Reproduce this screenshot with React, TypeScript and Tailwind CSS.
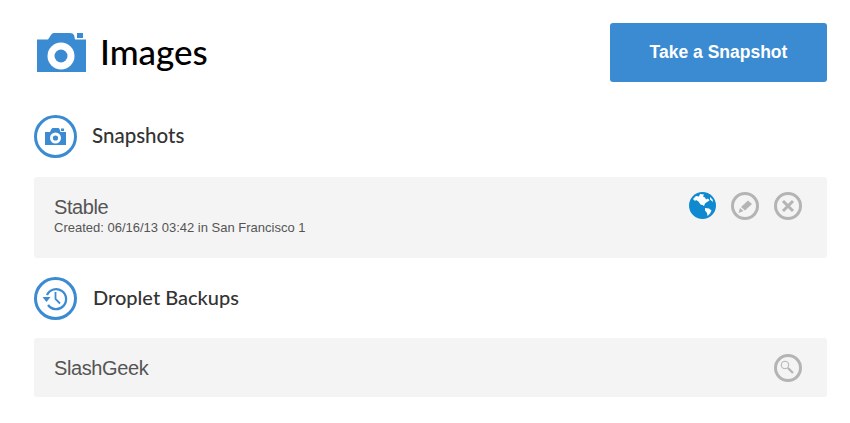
import React from "react";

const CameraBig = () => (
  <svg width="49" height="39" viewBox="0 0 49 39" className="block">
    <path fill="#3a8bd2" d="M0 6.500h11l3-4.500q1-2 3-2h16q3 0 4 2l1 4.500h11v32.500H0z" />
    <rect x="40" y="0" width="6" height="5" fill="#3a8bd2" />
    <circle cx="24" cy="23" r="13.500" fill="#fff" />
    <circle cx="24" cy="23" r="6.500" fill="#3a8bd2" />
  </svg>
);

const CircleIcon = ({ children }: { children: React.ReactNode }) => (
  <div className="w-[43px] h-[43px] shrink-0 rounded-full border-[3px] border-[#3a8bd2] flex items-center justify-center">
    {children}
  </div>
);

const CameraSmall = () => (
  <svg width="21" height="17" viewBox="0 0 21 17">
    <path fill="#3a8bd2" d="M0 4h5l1.500-3q.5-1 1.500-1h5q1 0 1.500 1l1 3H21v13H0z" />
    <rect x="16" y="0.500" width="3" height="2.500" fill="#3a8bd2" />
    <circle cx="10.500" cy="10" r="5.500" fill="#fff" />
    <circle cx="10.500" cy="10" r="2.600" fill="#3a8bd2" />
  </svg>
);

const HistoryIcon = () => (
  <svg width="27" height="27" viewBox="0 0 27 27" fill="none" stroke="#3a8bd2" strokeWidth="2.300">
    <path d="M5 10A10 10 0 1 1 6 20" />
    <path d="M0.500 12h8L4.500 17z" fill="#3a8bd2" stroke="none" />
    <path d="M13.500 7v7l4.500 4.500" strokeWidth="1.800" />
  </svg>
);

const GlobeIcon = () => (
  <svg width="27" height="27" viewBox="0 0 27 27">
    <circle cx="13.500" cy="13.500" r="13.500" fill="#0f8ad0" />
    <path
      fill="#fff"
      d="M4 7l3-3 3 .5 1-2.500 4 .5-1 2 2 1 1 2 2-1 1.500 2-2.500 1.500-2 1.500-1 2.500-1.500-1-2-.5-2-3-2.500-1.500-1 1z"
    />
    <path fill="#fff" d="M16 16l4 .5 2.500 2-1.500 3-2.500 2.500-.5-3-2-2.500z" />
    <path fill="#fff" d="M21 5l2.500 2.500.5 2.500-3-2.500z" />
  </svg>
);

const ActionCircle = ({ children }: { children: React.ReactNode }) => (
  <div className="w-[28px] h-[28px] rounded-full border-[3px] border-[#b4b4b4] flex items-center justify-center">
    {children}
  </div>
);

const PencilIcon = () => (
  <svg width="16" height="15" viewBox="0 0 16 15">
    <path fill="#b4b4b4" d="M4 8l7-6.500 4 3.500-7 6.500z" />
    <path fill="#b4b4b4" d="M1.500 14l1.500-5 3.500 3z" />
  </svg>
);

const CloseIcon = () => (
  <svg width="14" height="14" viewBox="0 0 14 14" stroke="#b4b4b4" strokeWidth="3">
    <path d="M2 2l10 10M12 2L2 12" />
  </svg>
);

const SearchIcon = () => (
  <svg width="18" height="18" viewBox="0 0 18 18" fill="none" stroke="#b4b4b4">
    <circle cx="6" cy="6" r="3.800" strokeWidth="1" />
    <path d="M9 9l5 5" strokeWidth="2.200" />
  </svg>
);

export default function App() {
  return (
    <div className="w-[850px] h-[423px] bg-white px-[34px] pt-[23px] font-['Lato',sans-serif] overflow-hidden">
      <div className="w-[793px]">
        <div className="flex items-center justify-between h-[59px]">
          <div className="flex items-center gap-[14px] ml-[3px]">
            <CameraBig />
            <h1 className="text-[35px] leading-none font-medium text-black -mt-[3px]">Images</h1>
          </div>
          <button className="w-[217px] h-[59px] rounded-[3px] bg-[#3a8bd2] text-white text-[17.500px] font-bold font-['Liberation_Sans',sans-serif]">
            Take a Snapshot
          </button>
        </div>

        <div className="flex items-center gap-[15px] mt-[33px] h-[43px]">
          <CircleIcon>
            <CameraSmall />
          </CircleIcon>
          <h2 className="text-[20.500px] leading-none font-medium text-[#333] -mt-[2px]">Snapshots</h2>
        </div>

        <div className="mt-[19px] h-[81px] bg-[#f4f4f4] rounded-[3px] flex justify-between pl-[20px] pr-[25px] font-['Liberation_Sans',sans-serif]">
          <div className="pt-[19px]">
            <div className="text-[20px] leading-[22px] tracking-[-0.4px] text-[#555]">Stable</div>
            <div className="text-[13px] leading-[16px] mt-[2px] text-[#555]">
              Created: 06/16/13 03:42 in San Francisco 1
            </div>
          </div>
          <div className="flex gap-[15px] pt-[15px]">
            <GlobeIcon />
            <ActionCircle>
              <PencilIcon />
            </ActionCircle>
            <ActionCircle>
              <CloseIcon />
            </ActionCircle>
          </div>
        </div>

        <div className="flex items-center gap-[16px] mt-[19px] h-[43px]">
          <CircleIcon>
            <HistoryIcon />
          </CircleIcon>
          <h2 className="text-[20px] leading-none font-medium text-[#333] -mt-[3px]">Droplet Backups</h2>
        </div>

        <div className="mt-[18px] h-[59px] bg-[#f4f4f4] rounded-[3px] flex items-center justify-between pl-[20px] pr-[25px] font-['Liberation_Sans',sans-serif]">
          <div className="text-[20px] leading-[22px] tracking-[-0.4px] text-[#555]">SlashGeek</div>
          <ActionCircle>
            <SearchIcon />
          </ActionCircle>
        </div>
      </div>
    </div>
  );
}
